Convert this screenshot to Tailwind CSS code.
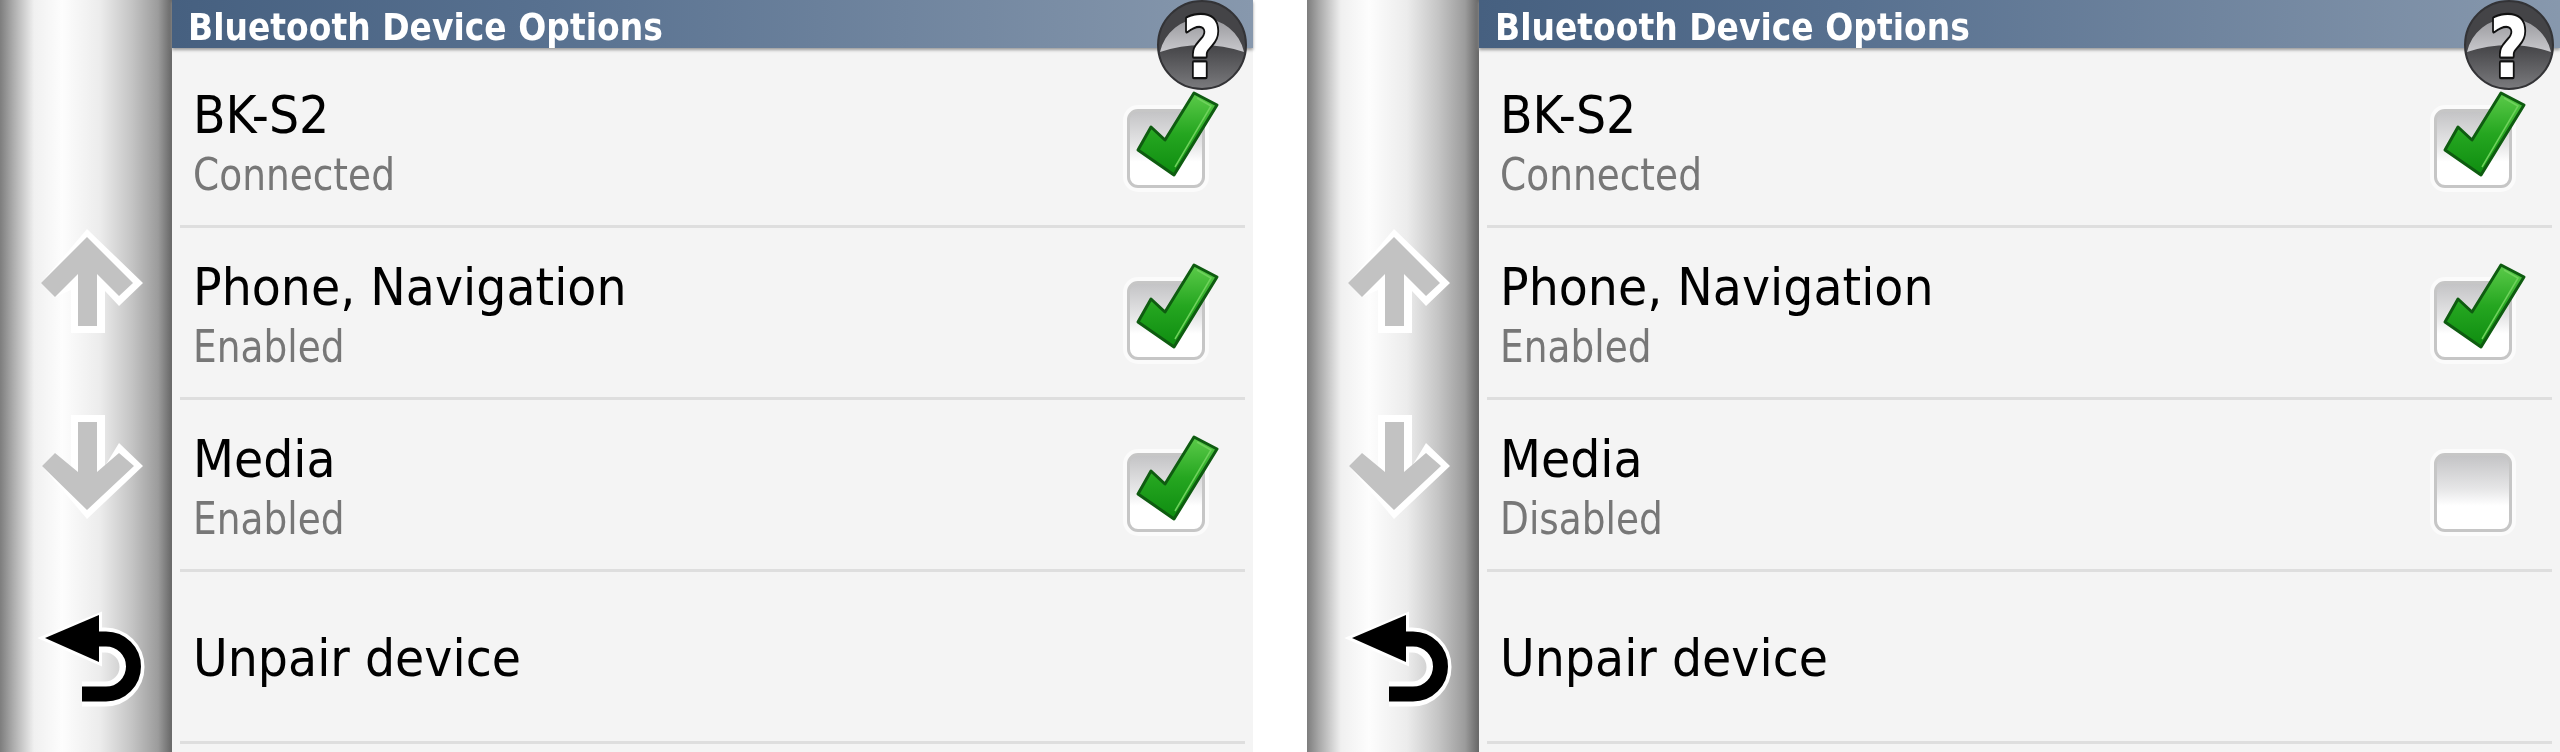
<!doctype html>
<html>
<head>
<meta charset="utf-8">
<script src="https://cdn.jsdelivr.net/npm/@tailwindcss/browser@4"></script>
</head>
<body class="m-0 bg-white">
<svg class="absolute w-0 h-0">
  <defs>
    <linearGradient id="g" x1="0" y1="0" x2="0" y2="1"><stop offset="0" stop-color="#5ccb4a"/><stop offset=".5" stop-color="#25a620"/><stop offset="1" stop-color="#0e8c10"/></linearGradient>
    <linearGradient id="q1" x1="0" y1="0" x2="0" y2="1"><stop offset="0" stop-color="#98989c"/><stop offset="1" stop-color="#c8c8cc"/></linearGradient>
    <linearGradient id="q2" x1="0" y1="0" x2="0" y2="1"><stop offset=".5" stop-color="#444447"/><stop offset="1" stop-color="#7b7b7e"/></linearGradient>
  </defs>
</svg>
<div class="flex gap-[54px] w-[2560px] h-[752px] overflow-hidden bg-white blur-[0.5px] [font-family:'DejaVu_Sans',sans-serif]">

  <!-- LEFT PANEL -->
  <section class="relative flex w-[1253px] h-[752px] shrink-0 bg-[#f4f4f4]">
    <aside class="w-[172px] h-full shrink-0 bg-[linear-gradient(90deg,#7d7d7d_0,#a8a8a8_12px,#f0f0f0_34px,#fdfdfd_62px,#ececec_100px,#c4c4c4_132px,#9c9c9c_158px,#6a6a6a_171px)]">
      <svg class="block" width="172" height="752" viewBox="0 0 172 752">
        <polygon fill="#fff" points="87,229 143,283 119,306 105,291 105,333 71,333 71,290 55,297 41,283"/>
        <polygon fill="#c2c2c2" points="87,237 133,283 119,296 97,274 97,326 78,326 78,274 55,297 41,283"/>
        <polygon fill="#fff" points="71,415 105,415 105,466 119,443 143,466 87,519 42,466 55,453 71,466"/>
        <polygon fill="#c2c2c2" points="78,422 97,422 97,472 119,453 134,466 87,510 42,466 55,453 78,472"/>
        <path d="M99 640H105A27 27 0 0 1 105 694H82" fill="none" stroke="#fff" stroke-width="25"/>
        <polygon fill="#fff" stroke="#fff" stroke-width="6" points="45,638 99,616 99,662"/>
        <path d="M99 639H106A27.5 27.5 0 0 1 106 694H82" fill="none" stroke="#000" stroke-width="15"/>
        <polygon fill="#000" points="45,638 99,615 99,662"/>
      </svg>
    </aside>
    <main class="flex-1 min-w-0 flex flex-col">
      <header class="h-12 shrink-0 pl-4 bg-[linear-gradient(90deg,#466080_0,#587190_35%,#8798ad_100%)] shadow-[0_2px_3px_#9a9a9a] text-white font-bold text-[33px] leading-[55px]"><span class="block scale-y-[1.12] origin-center">Bluetooth Device Options</span></header>
      <div class="flex flex-col pt-2 px-2">
        <div class="h-[172px] shrink-0 flex items-center justify-between border-b-[3px] border-[#dedede]">
          <div class="pl-[13px] pt-2 flex flex-col">
            <span class="block scale-y-[1.1] origin-center text-[47.5px] leading-[60px] text-black">BK-S2</span>
            <span class="block scale-y-[1.17] origin-center text-[37.5px] leading-[60px] text-[#777]">Connected</span>
          </div>
          <div class="relative mt-4 mr-[40px] w-[78px] h-[79px] rounded-[11px] border-[3px] border-[#c6c6c6] ring-4 ring-white/60 bg-[linear-gradient(180deg,#c4c4c6_0,#e6e6e7_45%,#fff_68%)]">
            <svg class="absolute -left-[2px] -top-[22px]" width="92" height="92" viewBox="0 0 92 92"><polygon fill="url(#g)" stroke="#0e5c10" stroke-width="3" stroke-linejoin="round" points="66,3 89,15 46,85 10,60 23,37 37,50"/><path d="M69 8 83 16 47 77" fill="none" stroke="#6fd25c" stroke-width="1.5"/></svg>
          </div>
        </div>
        <div class="h-[172px] shrink-0 flex items-center justify-between border-b-[3px] border-[#dedede]">
          <div class="pl-[13px] pt-2 flex flex-col">
            <span class="block scale-y-[1.1] origin-center text-[47.5px] leading-[60px] text-black">Phone, Navigation</span>
            <span class="block scale-y-[1.17] origin-center text-[37.5px] leading-[60px] text-[#777]">Enabled</span>
          </div>
          <div class="relative mt-4 mr-[40px] w-[78px] h-[79px] rounded-[11px] border-[3px] border-[#c6c6c6] ring-4 ring-white/60 bg-[linear-gradient(180deg,#c4c4c6_0,#e6e6e7_45%,#fff_68%)]">
            <svg class="absolute -left-[2px] -top-[22px]" width="92" height="92" viewBox="0 0 92 92"><polygon fill="url(#g)" stroke="#0e5c10" stroke-width="3" stroke-linejoin="round" points="66,3 89,15 46,85 10,60 23,37 37,50"/><path d="M69 8 83 16 47 77" fill="none" stroke="#6fd25c" stroke-width="1.5"/></svg>
          </div>
        </div>
        <div class="h-[172px] shrink-0 flex items-center justify-between border-b-[3px] border-[#dedede]">
          <div class="pl-[13px] pt-2 flex flex-col">
            <span class="block scale-y-[1.1] origin-center text-[47.5px] leading-[60px] text-black">Media</span>
            <span class="block scale-y-[1.17] origin-center text-[37.5px] leading-[60px] text-[#777]">Enabled</span>
          </div>
          <div class="relative mt-4 mr-[40px] w-[78px] h-[79px] rounded-[11px] border-[3px] border-[#c6c6c6] ring-4 ring-white/60 bg-[linear-gradient(180deg,#c4c4c6_0,#e6e6e7_45%,#fff_68%)]">
            <svg class="absolute -left-[2px] -top-[22px]" width="92" height="92" viewBox="0 0 92 92"><polygon fill="url(#g)" stroke="#0e5c10" stroke-width="3" stroke-linejoin="round" points="66,3 89,15 46,85 10,60 23,37 37,50"/><path d="M69 8 83 16 47 77" fill="none" stroke="#6fd25c" stroke-width="1.5"/></svg>
          </div>
        </div>
        <div class="h-[172px] shrink-0 flex items-center border-b-[3px] border-[#dedede]">
          <span class="block pl-[13px] mt-[3px] scale-y-[1.1] origin-left text-[47.5px] leading-[60px] text-black">Unpair device</span>
        </div>
      </div>
    </main>
    <svg class="absolute right-[5px] top-0 overflow-visible" width="92" height="92" viewBox="0 0 92 92">
      <circle cx="46" cy="45" r="44" fill="url(#q2)" stroke="#333336" stroke-width="2"/>
      <path d="M4 52A43 43 0 0 1 88 52Q46 38 4 52Z" fill="url(#q1)"/>
      <text transform="translate(46 77) scale(.92 1.14)" text-anchor="middle" font-family="DejaVu Sans" font-weight="700" font-size="74" fill="#fff" stroke="#111" stroke-width="4" paint-order="stroke" stroke-linejoin="round">?</text>
    </svg>
  </section>

  <!-- RIGHT PANEL -->
  <section class="relative flex w-[1253px] h-[752px] shrink-0 bg-[#f4f4f4]">
    <aside class="w-[172px] h-full shrink-0 bg-[linear-gradient(90deg,#7d7d7d_0,#a8a8a8_12px,#f0f0f0_34px,#fdfdfd_62px,#ececec_100px,#c4c4c4_132px,#9c9c9c_158px,#6a6a6a_171px)]">
      <svg class="block" width="172" height="752" viewBox="0 0 172 752">
        <polygon fill="#fff" points="87,229 143,283 119,306 105,291 105,333 71,333 71,290 55,297 41,283"/>
        <polygon fill="#c2c2c2" points="87,237 133,283 119,296 97,274 97,326 78,326 78,274 55,297 41,283"/>
        <polygon fill="#fff" points="71,415 105,415 105,466 119,443 143,466 87,519 42,466 55,453 71,466"/>
        <polygon fill="#c2c2c2" points="78,422 97,422 97,472 119,453 134,466 87,510 42,466 55,453 78,472"/>
        <path d="M99 640H105A27 27 0 0 1 105 694H82" fill="none" stroke="#fff" stroke-width="25"/>
        <polygon fill="#fff" stroke="#fff" stroke-width="6" points="45,638 99,616 99,662"/>
        <path d="M99 639H106A27.5 27.5 0 0 1 106 694H82" fill="none" stroke="#000" stroke-width="15"/>
        <polygon fill="#000" points="45,638 99,615 99,662"/>
      </svg>
    </aside>
    <main class="flex-1 min-w-0 flex flex-col">
      <header class="h-12 shrink-0 pl-4 bg-[linear-gradient(90deg,#466080_0,#587190_35%,#8798ad_100%)] shadow-[0_2px_3px_#9a9a9a] text-white font-bold text-[33px] leading-[55px]"><span class="block scale-y-[1.12] origin-center">Bluetooth Device Options</span></header>
      <div class="flex flex-col pt-2 px-2">
        <div class="h-[172px] shrink-0 flex items-center justify-between border-b-[3px] border-[#dedede]">
          <div class="pl-[13px] pt-2 flex flex-col">
            <span class="block scale-y-[1.1] origin-center text-[47.5px] leading-[60px] text-black">BK-S2</span>
            <span class="block scale-y-[1.17] origin-center text-[37.5px] leading-[60px] text-[#777]">Connected</span>
          </div>
          <div class="relative mt-4 mr-[40px] w-[78px] h-[79px] rounded-[11px] border-[3px] border-[#c6c6c6] ring-4 ring-white/60 bg-[linear-gradient(180deg,#c4c4c6_0,#e6e6e7_45%,#fff_68%)]">
            <svg class="absolute -left-[2px] -top-[22px]" width="92" height="92" viewBox="0 0 92 92"><polygon fill="url(#g)" stroke="#0e5c10" stroke-width="3" stroke-linejoin="round" points="66,3 89,15 46,85 10,60 23,37 37,50"/><path d="M69 8 83 16 47 77" fill="none" stroke="#6fd25c" stroke-width="1.5"/></svg>
          </div>
        </div>
        <div class="h-[172px] shrink-0 flex items-center justify-between border-b-[3px] border-[#dedede]">
          <div class="pl-[13px] pt-2 flex flex-col">
            <span class="block scale-y-[1.1] origin-center text-[47.5px] leading-[60px] text-black">Phone, Navigation</span>
            <span class="block scale-y-[1.17] origin-center text-[37.5px] leading-[60px] text-[#777]">Enabled</span>
          </div>
          <div class="relative mt-4 mr-[40px] w-[78px] h-[79px] rounded-[11px] border-[3px] border-[#c6c6c6] ring-4 ring-white/60 bg-[linear-gradient(180deg,#c4c4c6_0,#e6e6e7_45%,#fff_68%)]">
            <svg class="absolute -left-[2px] -top-[22px]" width="92" height="92" viewBox="0 0 92 92"><polygon fill="url(#g)" stroke="#0e5c10" stroke-width="3" stroke-linejoin="round" points="66,3 89,15 46,85 10,60 23,37 37,50"/><path d="M69 8 83 16 47 77" fill="none" stroke="#6fd25c" stroke-width="1.5"/></svg>
          </div>
        </div>
        <div class="h-[172px] shrink-0 flex items-center justify-between border-b-[3px] border-[#dedede]">
          <div class="pl-[13px] pt-2 flex flex-col">
            <span class="block scale-y-[1.1] origin-center text-[47.5px] leading-[60px] text-black">Media</span>
            <span class="block scale-y-[1.17] origin-center text-[37.5px] leading-[60px] text-[#777]">Disabled</span>
          </div>
          <div class="relative mt-4 mr-[40px] w-[78px] h-[79px] rounded-[11px] border-[3px] border-[#c6c6c6] ring-4 ring-white/60 bg-[linear-gradient(180deg,#c4c4c6_0,#e6e6e7_45%,#fff_68%)]"></div>
        </div>
        <div class="h-[172px] shrink-0 flex items-center border-b-[3px] border-[#dedede]">
          <span class="block pl-[13px] mt-[3px] scale-y-[1.1] origin-left text-[47.5px] leading-[60px] text-black">Unpair device</span>
        </div>
      </div>
    </main>
    <svg class="absolute right-[5px] top-0 overflow-visible" width="92" height="92" viewBox="0 0 92 92">
      <circle cx="46" cy="45" r="44" fill="url(#q2)" stroke="#333336" stroke-width="2"/>
      <path d="M4 52A43 43 0 0 1 88 52Q46 38 4 52Z" fill="url(#q1)"/>
      <text transform="translate(46 77) scale(.92 1.14)" text-anchor="middle" font-family="DejaVu Sans" font-weight="700" font-size="74" fill="#fff" stroke="#111" stroke-width="4" paint-order="stroke" stroke-linejoin="round">?</text>
    </svg>
  </section>
</div>
</body>
</html>
